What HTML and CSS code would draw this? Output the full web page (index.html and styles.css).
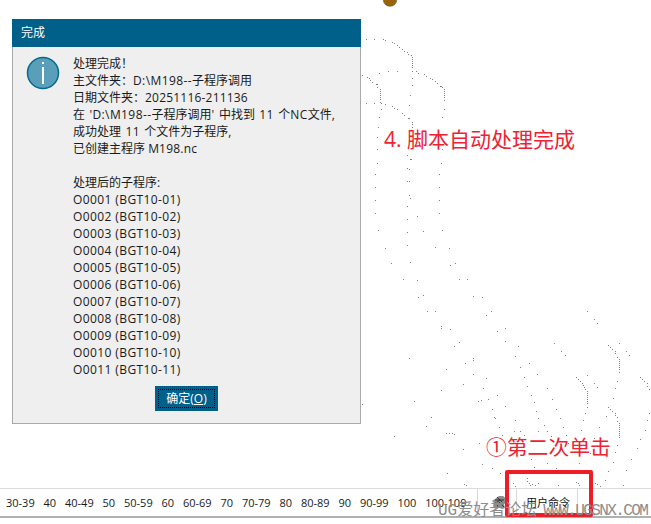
FILE: index.html
```html
<!DOCTYPE html>
<html lang="zh-CN">
<head>
<meta charset="utf-8">
<title>完成</title>
<link rel="stylesheet" href="styles.css">
</head>
<body>
<div class="page">
  <svg class="dots" width="651" height="524" viewBox="0 0 651 524" aria-hidden="true">
    <path class="dot-path" d="M366 39h1M374 39h1M383 39h1M385 40h1M392 42h1M394 43h1M397 45h1M399 47h1M402 49h1M404 51h1M407 52h1M408 54h1M411 55h1M412 57h1M412 59h1M412 61h1M412 63h1M412 65h1M412 67h1M412 71h1M416 71h1M418 73h1M424 74h1M426 76h1M430 78h1M432 79h1M435 81h1M437 83h1M440 86h2M442 87h1M444 89h1M444 91h1M444 93h1M444 95h1M444 97h1M444 100h1M444 109h1M442 117h1M362 75h1M367 77h1M369 78h1M370 80h1M372 82h1M376 84h2M377 87h1M380 89h1M380 91h1M380 93h1M380 95h1M380 97h1M380 99h1M380 102h1M366 103h1M374 103h1M381 103h1M385 104h1M392 106h1M394 108h1M397 109h1M402 113h1M404 115h1M408 118h2M412 122h1M412 124h1M412 127h1M379 73h1M388 71h1M397 71h1M412 78h1M412 85h1M410 95h1M409 105h1M381 109h1M379 117h1M378 127h1M377 137h1M377 149h1M407 155h1M411 159h1M442 149h1M410 159h1M377 163h1M441 163h1M375 174h1M439 174h1M407 168h1M409 169h1M407 181h1M409 181h1M375 187h1M439 187h1M409 195h1M410 198h1M375 200h1M439 200h1M407 206h1M375 213h1M439 213h1M417 216h1M407 219h1M378 230h1M407 232h1M423 231h1M442 230h1M407 245h1M385 248h1M435 247h1M449 248h1M391 263h1M410 262h1M455 263h1M450 265h1M403 279h1M417 280h1M459 279h1M467 279h1M418 297h1M423 295h1M473 296h1M482 297h1M427 311h1M435 311h1M486 315h1M491 311h1M587 311h1M594 319h1M597 323h1M441 326h1M441 328h1M450 329h1M497 331h1M505 328h1M459 342h1M454 346h1M505 341h1M518 346h1M554 343h1M561 351h1M565 355h1M619 343h1M626 351h1M629 355h1M608 345h1M610 347h1M612 349h1M615 351h1M615 353h1M617 357h1M619 359h1M619 361h1M619 363h1M619 365h1M619 367h1M619 369h1M619 372h1M617 381h1M409 358h1M473 358h1M473 360h1M465 363h1M515 356h1M529 363h1M520 367h1M446 369h1M473 374h1M537 374h1M486 378h1M524 377h1M587 375h1M576 377h1M578 379h1M580 381h1M582 383h1M583 385h1M584 387h1M585 389h1M587 391h1M587 393h1M587 395h1M587 397h1M587 399h1M587 401h1M587 403h1M587 407h1M594 383h1M597 387h1M615 388h1M613 398h1M640 377h1M642 379h1M644 381h1M647 383h1M647 386h1M649 389h1M441 390h1M463 384h1M483 388h1M527 386h1M547 388h1M497 395h1M531 395h1M488 399h1M481 400h1M478 401h1M552 399h1M414 401h1M362 404h1M534 402h1M505 406h1M492 409h1M556 409h1M536 411h1M608 407h1M610 409h1M612 411h1M615 413h1M615 415h1M617 417h1M619 423h1M619 425h1M619 427h1M619 429h1M619 431h1M619 433h1M619 435h1M619 437h1M585 413h1M606 416h1M649 413h1M647 420h1M645 430h1M640 439h1M637 448h1M431 417h1M494 417h1M495 418h1M515 420h1M538 418h1M560 418h1M583 420h1M426 426h1M499 427h1M544 425h1M563 427h1M599 427h1M581 430h1M446 433h1M449 433h1M454 434h1M394 436h1M514 431h1M520 431h1M524 435h1M547 431h1M551 436h1M566 435h1M502 435h1M479 443h1M463 449h1M617 445h1M617 421h1M594 438h1M538 431h1M615 452h1M613 462h1M631 459h1M608 471h1M626 470h1M605 480h1M623 485h1M595 483h1M597 484h1M600 486h1M578 483h1M576 482h1M579 485h1M558 485h1M538 483h1M535 485h1M527 478h1M527 481h1M529 483h1M532 484h1M530 485h1M531 459h1M579 463h1M556 468h1M534 467h1M547 463h1M590 453h1M568 443h1M551 436h1M464 484h1M466 485h1M482 464h1M492 468h1M500 473h1M447 473h1M452 433h1M513 483h1M515 486h1"/>
    <ellipse class="blob" cx="390" cy="0" rx="6.7" ry="6.3"/>
  </svg>

  <section class="dialog">
    <header class="dialog-title">完成</header>
    <div class="dialog-body">
      <svg class="info-icon" width="34" height="34" viewBox="0 0 34 34" aria-hidden="true">
        <circle class="info-disc" cx="17" cy="17" r="15.5"/>
        <rect class="info-mark" x="16" y="6" width="2" height="2"/>
        <rect class="info-mark" x="16" y="11" width="2" height="17"/>
      </svg>
      <div class="message">
        <p>处理完成！</p>
        <p>主文件夹：<span class="code">D:\M198--</span>子程序调用</p>
        <p>日期文件夹：<span class="date">20251116-211136</span></p>
        <p class="spaced">在 <span class="code">'D:\M198--</span>子程序调用<span class="code">'</span> 中找到 <span class="code">11</span> 个<span class="code">NC</span>文件,</p>
        <p class="spaced">成功处理 <span class="code">11</span> 个文件为子程序,</p>
        <p>已创建主程序 <span class="date">M198.nc</span></p>
        <p>&nbsp;</p>
        <p>处理后的子程序:</p>
        <p class="code">O0001 (BGT10-01)</p>
        <p class="code">O0002 (BGT10-02)</p>
        <p class="code">O0003 (BGT10-03)</p>
        <p class="code">O0004 (BGT10-04)</p>
        <p class="code">O0005 (BGT10-05)</p>
        <p class="code">O0006 (BGT10-06)</p>
        <p class="code">O0007 (BGT10-07)</p>
        <p class="code">O0008 (BGT10-08)</p>
        <p class="code">O0009 (BGT10-09)</p>
        <p class="code">O0010 (BGT10-10)</p>
        <p class="code">O0011 (BGT10-11)</p>
      </div>
    </div>
    <div class="dialog-actions">
      <button class="ok-button" type="button"><span class="ok-focus">确定(<u>O</u>)</span></button>
    </div>
  </section>

  <p class="note note-done">4. 脚本自动处理完成</p>
  <p class="note note-click">①第二次单击</p>

  <footer class="tabbar">
    <div class="tabs">
      <span>30-39</span><span>40</span><span>40-49</span><span>50</span><span>50-59</span><span>60</span><span>60-69</span><span>70</span><span>70-79</span><span>80</span><span>80-89</span><span>90</span><span>90-99</span><span>100</span><span>100-109</span>
    </div>
    <div class="tab-tool">
      <svg width="16" height="14" viewBox="0 0 16 14" aria-hidden="true">
        <path class="tool-shape" d="M3 3 7 0h4l4 3v4l-3 1 1 4-3 1-4-2-3 2-2-3 1-3-2-2z"/>
        <path class="tool-lines" d="M3 4h9M5 1l6 6M2 8l6-4M7 6l5 5M6 9l-2 3"/>
      </svg>
    </div>
    <div class="tab-command">用户命令</div>
  </footer>

  <div class="highlight"></div>
  <div class="watermark"><span class="wm-cn">UG爱好者论坛</span><span class="wm-lat">WWW.UGSNX.COM</span></div>
</div>
</body>
</html>
```

FILE: styles.css
```css
* { box-sizing: border-box; }
html, body { margin: 0; padding: 0; background: #fff; }
body { font-family: "Open Sans", "Noto Sans CJK SC", sans-serif; font-size: 12px; color: #1a1a1a; }
p { margin: 0; }

.page {
  position: relative;
  width: 651px;
  height: 524px;
  overflow: hidden;
  display: flex;
  flex-direction: column;
  align-items: flex-start;
  padding-top: 19px;
}

.dots { position: absolute; left: 0; top: 0; }
.dot-path { fill: none; stroke: #808080; stroke-width: 1; transform: translateY(.5px); shape-rendering: crispEdges; }
.blob { fill: #9a6209; stroke: #6e5a3c; stroke-width: .6; }

.dialog {
  position: relative;
  margin-left: 12px;
  width: 349px;
  height: 405px;
  background: #efefef;
  border: 1px solid #a9a9a9;
  border-top: 0;
  display: flex;
  flex-direction: column;
}
.dialog-title {
  height: 28px;
  margin: 0 -1px;
  padding-left: 9px;
  line-height: 28px;
  background: #00608a;
  color: #fff;
}
.dialog-body {
  display: flex;
  align-items: flex-start;
  padding: 8px 0 0 12px;
}
.info-icon { flex: none; margin: 1px 0 0 1px; }
.info-disc { fill: #5a9fba; stroke: #05698f; stroke-width: 1.5; }
.info-mark { fill: #fff; }
.message { margin-left: 13px; line-height: 17px; white-space: nowrap; }
.code { letter-spacing: .4px; }
.date { letter-spacing: .2px; }
.spaced { word-spacing: 1.3px; }

.dialog-actions { display: flex; justify-content: center; margin-top: 8px; }
.ok-button {
  width: 63px;
  height: 25px;
  padding: 3px;
  border: 0;
  background: #00608a;
  font: inherit;
  color: #fff;
}
.ok-focus {
  display: block;
  height: 19px;
  line-height: 17px;
  border: 1px dotted #000;
}

.note { position: absolute; margin: 0; color: #ee2233; white-space: nowrap; }
.note-done { left: 384px; top: 125px; font-size: 21px; line-height: 28px; }
.note-click { left: 486px; top: 433px; font-size: 20.8px; line-height: 28px; }

.tabbar {
  margin-top: auto;
  margin-bottom: 6px;
  width: 100%;
  height: 30px;
  border-top: 1px solid #dcdcdc;
  border-bottom: 2px solid #b0b0b0;
  display: flex;
  align-items: center;
  font-size: 11px;
  position: relative;
}
.tabs { display: flex; gap: 8.85px; padding-left: 6px; width: 478px; border-right: 1px solid #d8d8d8; height: 100%; align-items: center; white-space: nowrap; }
.tab-tool { width: 39px; height: 100%; padding-left: 14px; display: flex; align-items: center; border-right: 1px solid #d8d8d8; }
.tool-shape { fill: #8c8c8c; }
.tool-lines { fill: none; stroke: #333; stroke-width: 1; }
.tab-command { width: 61px; height: 100%; padding-left: 2px; line-height: 28px; text-align: center; border-right: 1px solid #d8d8d8; color: #111; }

.highlight {
  position: absolute;
  left: 505px;
  top: 470px;
  width: 88px;
  height: 47px;
  border: 4px solid #ee1c25;
  border-radius: 2px;
}

.watermark {
  position: absolute;
  left: 438px;
  top: 501px;
  display: flex;
  gap: 6px;
  color: #8c8c8c;
  white-space: nowrap;
  line-height: 20px;
  font-family: "Liberation Mono", "Noto Sans CJK SC", monospace;
  font-size: 16px;
}
.wm-lat { letter-spacing: -1.6px; }
```
